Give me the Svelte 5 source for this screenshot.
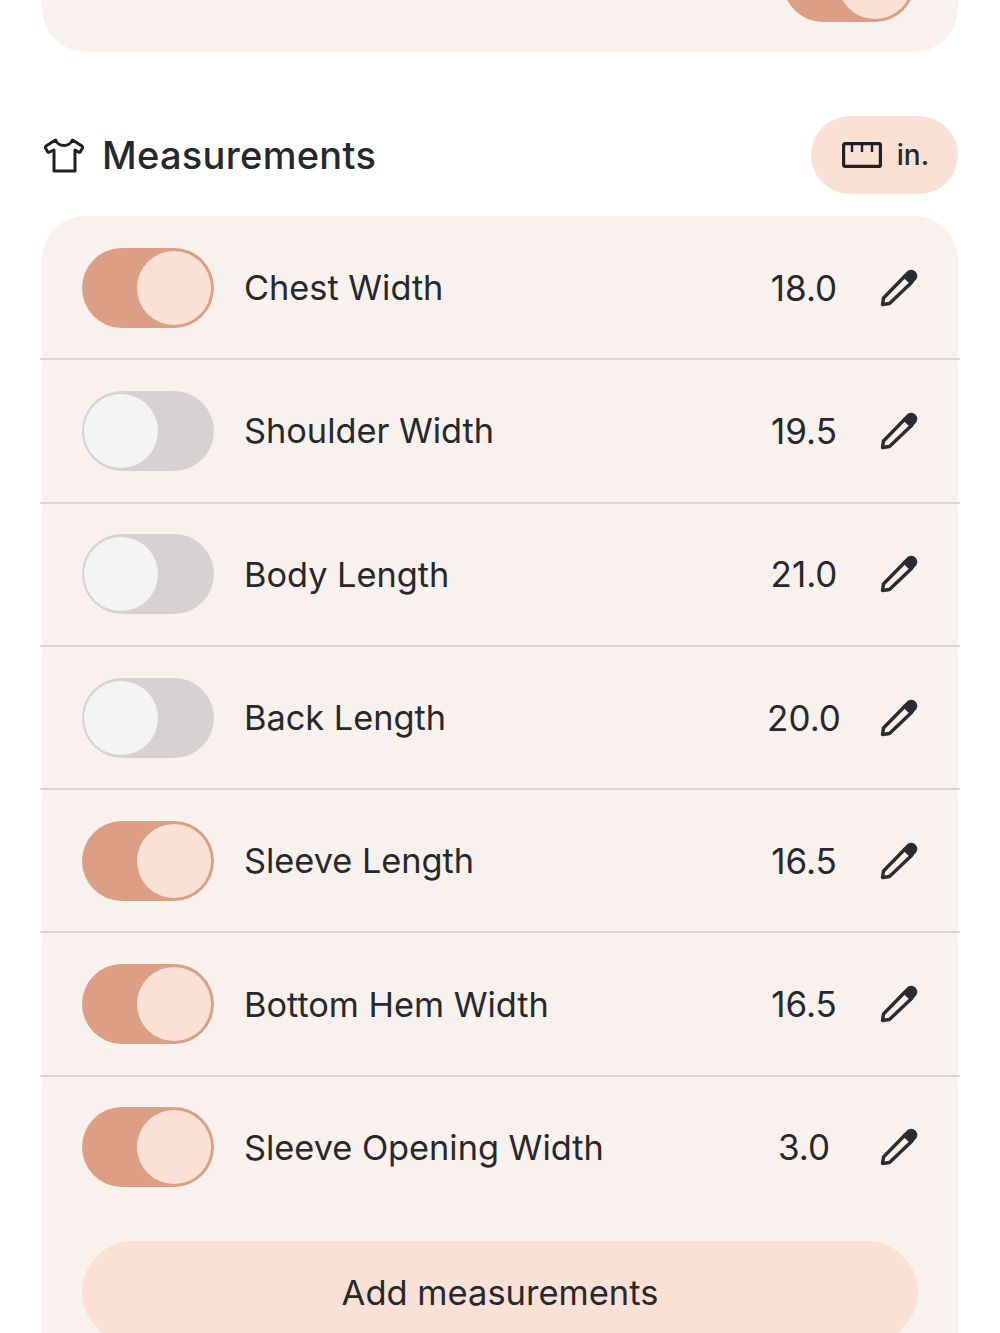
<script>
  const rows = [
    { name: 'Chest Width', value: '18.0', on: true },
    { name: 'Shoulder Width', value: '19.5', on: false },
    { name: 'Body Length', value: '21.0', on: false },
    { name: 'Back Length', value: '20.0', on: false },
    { name: 'Sleeve Length', value: '16.5', on: true },
    { name: 'Bottom Hem Width', value: '16.5', on: true },
    { name: 'Sleeve Opening Width', value: '3.0', on: true }
  ];
</script>

<div class="page">
  <section class="top-card">
    <span class="top-sliver"></span>
    <span class="toggle on top-toggle"><span class="knob"></span></span>
  </section>

  <header class="head">
    <div class="title">
      <svg class="shirt" viewBox="0 0 40 35" width="40" height="35" fill="none" stroke="#1f2124" stroke-width="3" stroke-linejoin="round" stroke-linecap="round">
        <path d="M11.500 2 L2 8 Q1 9 1.500 10 L3.500 13.500 Q4 14.500 5.500 14 L10 12 V33 H31 V12 L34.500 14 Q36 14.500 36.500 13.500 L38.500 10 Q39 9 38 8 L28.500 2 Q26 7.500 20 7.500 Q14 7.500 11.500 2 Z"/>
      </svg>
      <h2>Measurements</h2>
    </div>
    <div class="unit">
      <svg viewBox="0 0 40 26" width="40" height="26" fill="none" stroke="#1f2124" stroke-width="3.200">
        <rect x="1.600" y="1.600" width="36.800" height="22.800" rx="1.500"/>
        <path d="M10 2 V10 M20 2 V10 M30 2 V10" stroke-width="2.400"/>
      </svg>
      <span>in.</span>
    </div>
  </header>

  <section class="list">
    {#each rows as row}
      <div class="row">
        <span class="toggle" class:on={row.on}><span class="knob"></span></span>
        <span class="name">{row.name}</span>
        <span class="value">{row.value}</span>
        <svg class="pencil" viewBox="0 0 38 38" width="38" height="38" fill="none" stroke="#2a2c30" stroke-width="3.400" stroke-linejoin="round">
          <path d="M2.500 35.500 L3.500 29 L25 7 L31.500 13.500 L9.500 34.500 Z"/>
          <path d="M24.500 7.500 L29 3 Q32 1.500 34.500 4 Q36.500 6.500 35 9 L31 13.500 Z" fill="#2a2c30"/>
        </svg>
      </div>
    {/each}
    <div class="add-wrap">
      <button class="add">Add measurements</button>
    </div>
  </section>
</div>

<style>
  :global(body) {
    margin: 0;
    background: #fff;
  }
  .page {
    height: 1333px;
    overflow: hidden;
    font-family: Inter, "Liberation Sans", sans-serif;
    color: #26282c;
    padding: 0 42px;
    box-sizing: border-box;
  }
  .top-card {
    height: 52px;
    background: #f9f1ee;
    border-radius: 0 0 44px 44px;
    display: flex;
    justify-content: space-between;
    align-items: flex-start;
    padding: 0 43px 0 40px;
    box-sizing: border-box;
    overflow: hidden;
  }
  .top-sliver {
    width: 332px;
    height: 6px;
    background: #faf3f0;
    border-radius: 0 0 3px 3px;
  }
  .top-toggle {
    margin-top: -58px;
  }
  .head {
    height: 164px;
    display: flex;
    align-items: flex-end;
    justify-content: space-between;
    padding-bottom: 22px;
    box-sizing: border-box;
  }
  .title {
    display: flex;
    align-items: center;
    gap: 18px;
    margin-left: 2px;
    height: 78px;
  }
  .shirt {
    flex: none;
  }
  h2 {
    margin: 0;
    font-size: 38px;
    font-weight: 500;
    letter-spacing: 0.3px;
    color: #26282c;
  }
  .unit {
    width: 147px;
    height: 78px;
    border-radius: 39px;
    background: #fbe0d5;
    display: flex;
    align-items: center;
    justify-content: center;
    gap: 15px;
    padding-left: 2px;
    box-sizing: border-box;
    font-size: 28px;
    font-weight: 500;
  }
  .list {
    background: #f9f1ee;
    border-radius: 44px 44px 0 0;
    height: 1200px;
  }
  .row {
    height: 143.300px;
    box-sizing: border-box;
    display: flex;
    align-items: center;
    padding: 0 40px;
    position: relative;
  }
  .row + .row::before {
    content: "";
    position: absolute;
    left: -2px;
    right: -2px;
    top: -1px;
    height: 2px;
    background: #dad5d3;
  }
  .toggle {
    width: 132px;
    height: 80px;
    border-radius: 40px;
    background: #d6d2d1;
    display: flex;
    align-items: center;
    padding: 0 2px;
    box-sizing: border-box;
    flex: none;
  }
  .toggle.on {
    background: #dc9e84;
    justify-content: flex-end;
    padding: 0 3px;
  }
  .knob {
    width: 74px;
    height: 74px;
    border-radius: 50%;
    background: #f5f4f4;
  }
  .toggle.on .knob {
    background: #fbe0d5;
  }
  .name {
    margin-left: 30px;
    font-size: 34.300px;
    font-weight: 400;
    flex: 1;
  }
  .value {
    width: 90px;
    text-align: center;
    font-size: 35px;
    margin-right: 31px;
  }
  .pencil {
    flex: none;
  }
  .add-wrap {
    padding: 0 40px;
    margin-top: 22px;
  }
  .add {
    display: block;
    width: 100%;
    height: 102px;
    border: 0;
    border-radius: 51px;
    background: #fbe0d5;
    font: 400 34.500px Inter, "Liberation Sans", sans-serif;
    color: #26282c;
  }
</style>
